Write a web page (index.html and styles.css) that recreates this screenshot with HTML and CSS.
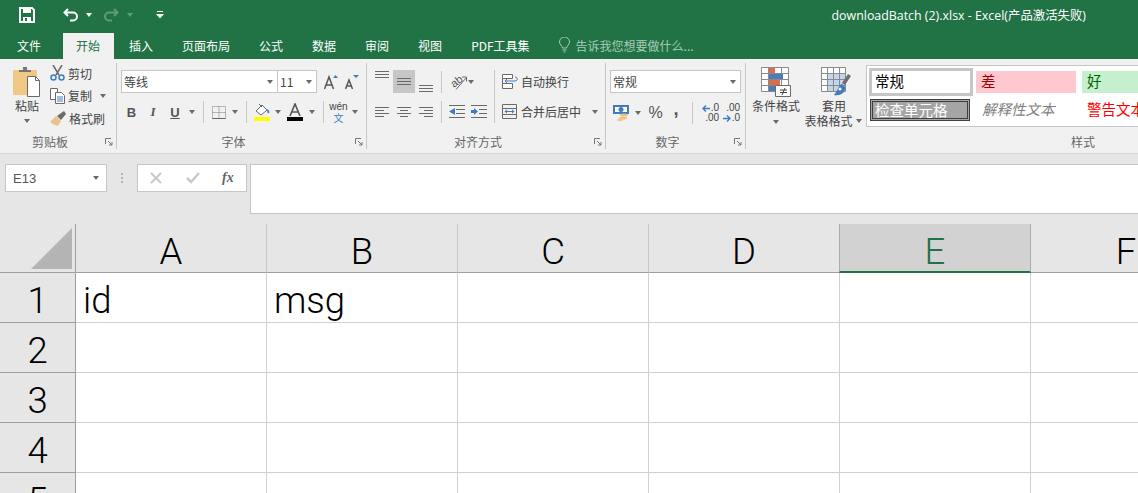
FILE: index.html
```html
<!DOCTYPE html>
<html>
<head>
<meta charset="utf-8">
<title>downloadBatch (2).xlsx - Excel</title>
<link rel="stylesheet" href="styles.css">
</head>
<body>

<div class="titlebar">
  <svg class="qa-save" width="16" height="16" viewBox="0 0 16 16"><path d="M1 1h12l2 2v12H1z" fill="none" stroke="#fff" stroke-width="2"/><path d="M4 1h8v5H4zM4 10h8v5H4z" fill="#fff"/><path d="M6 11h2v3H6z" fill="#217346"/></svg>
  <svg class="qa-undo" width="16" height="14" viewBox="0 0 16 14"><path d="M5 1L1.500 4.500 5 8M2 4.500h8a4 4 0 0 1 0 8H7" fill="none" stroke="#fff" stroke-width="2"/></svg>
  <span class="caret caret-white qa-caret1"></span>
  <svg class="qa-redo" width="16" height="14" viewBox="0 0 16 14"><path d="M11 1l3.500 3.500L11 8M14 4.500H6a4 4 0 0 0 0 8h3" fill="none" stroke="#5f9c7e" stroke-width="2"/></svg>
  <span class="caret caret-dim qa-caret2"></span>
  <svg class="qa-more" width="8" height="9" viewBox="0 0 8 9"><path d="M1 1.500h6" stroke="#fff"/><path d="M0 4h8L4 8.500z" fill="#fff"/></svg>
  <div class="doc-title">downloadBatch (2).xlsx - Excel(产品激活失败)</div>
</div>

<div class="tabs">
  <a class="tab tab-first">文件</a>
  <a class="tab tab-active">开始</a>
  <a class="tab">插入</a>
  <a class="tab">页面布局</a>
  <a class="tab">公式</a>
  <a class="tab">数据</a>
  <a class="tab">审阅</a>
  <a class="tab">视图</a>
  <a class="tab">PDF工具集</a>
  <div class="tell">
    <svg width="11" height="16" viewBox="0 0 11 16"><path d="M3.500 11C3 8.500 .5 7.500 .5 5a5 5 0 0 1 10 0c0 2.500-2.500 3.500-3 6zM3.500 13h4M4.500 15h2" fill="none" stroke="#a9cbb8"/></svg>
    <span>告诉我您想要做什么...</span>
  </div>
</div>

<div class="ribbon">

  <div class="group group-clip">
    <div class="group-body clip-body">
      <div class="paste">
        <svg width="28" height="30" viewBox="0 0 28 30"><rect y="3" width="24" height="25" rx="1" fill="#f0c884"/><path d="M6 5V3h4V0h4v3h4v2z" fill="#767676"/><path d="M14.500 9.500h8l4 4v16h-12z" fill="#fff" stroke="#6a6a6a"/><path d="M22.500 9.500v4h4" fill="none" stroke="#6a6a6a"/></svg>
        <span class="paste-label">粘贴</span>
        <span class="caret"></span>
      </div>
      <div class="clip-list">
        <div class="clip-row">
          <svg width="15" height="16" viewBox="0 0 15 16"><path d="M3 0l6 10M12 0L6 10" stroke="#6a6a6a" stroke-width="1.500"/><circle cx="3.500" cy="12.500" r="2.500" fill="none" stroke="#3f7cbf" stroke-width="1.500"/><circle cx="11.500" cy="12.500" r="2.500" fill="none" stroke="#3f7cbf" stroke-width="1.500"/></svg>
          <span>剪切</span>
        </div>
        <div class="clip-row">
          <svg width="15" height="16" viewBox="0 0 15 16"><path d="M.5 .5h7v11h-7z" fill="#fff" stroke="#6a6a6a"/><path d="M5.500 4.500h6l3 3v8h-9z" fill="#fff" stroke="#6a6a6a"/><path d="M7 9h6M7 11h6M7 13h6" stroke="#3f7cbf"/></svg>
          <span>复制</span>
          <span class="caret caret-copy"></span>
        </div>
        <div class="clip-row">
          <svg width="16" height="15" viewBox="0 0 16 15"><path d="M0 11l6-6 5 5-3 5c-3-1-6-2-8-4z" fill="#e8c48a"/><path d="M7 5l4 4 5-6-2-3z" fill="#6a6a6a"/></svg>
          <span>格式刷</span>
        </div>
      </div>
    </div>
    <div class="group-foot"><span class="group-name">剪贴板</span><svg class="launcher" width="8" height="8" viewBox="0 0 8 8"><path d="M.5 6V.5H6M3 3l4 4M7 4v3H4" fill="none" stroke="#777"/></svg></div>
  </div>

  <div class="group group-font">
    <div class="group-body font-body">
      <div class="font-top">
        <div class="combo combo-font"><span>等线</span><span class="caret"></span></div>
        <div class="combo combo-size"><span>11</span><span class="caret"></span></div>
        <div class="grow-btns">
          <svg width="14" height="16" viewBox="0 0 14 16"><path d="M.5 15L5 3l4.500 12M2.500 11h5" fill="none" stroke="#555" stroke-width="1.500"/><path d="M9 4l2.500-3L14 4z" fill="#3f7cbf"/></svg>
          <svg width="14" height="16" viewBox="0 0 14 16"><path d="M.5 15L4 6l3.500 9M2 12h4" fill="none" stroke="#555" stroke-width="1.500"/><path d="M8 1h6l-3 3z" fill="#3f7cbf"/></svg>
        </div>
      </div>
      <div class="font-tools">
        <span class="t-b">B</span>
        <span class="t-i">I</span>
        <span class="t-u">U</span>
        <span class="caret"></span>
        <span class="sep"></span>
        <svg width="14" height="13" viewBox="0 0 14 13"><path d="M.5 .5h13v12H.5zM7 .5v12M.5 6.500h13" fill="none" stroke="#7a7a7a" stroke-dasharray="1 1"/><path d="M.5 12.500h13" stroke="#666"/></svg>
        <span class="caret"></span>
        <span class="sep"></span>
        <svg width="17" height="18" viewBox="0 0 17 18"><path d="M2 8l6-6 5 5-6 5z" fill="#fff" stroke="#6a6a6a"/><path d="M5 1l3 3" stroke="#6a6a6a"/><path d="M13 6c2 1 3 3 2 4s-2 0-2-4z" fill="#3f7cbf"/><rect y="14" width="16" height="4" fill="#ffff00"/></svg>
        <span class="caret"></span>
        <svg width="16" height="18" viewBox="0 0 16 18"><path d="M3 13L8 1l5 12M5 9h6" fill="none" stroke="#555" stroke-width="1.600"/><rect y="14" width="16" height="4" fill="#000"/></svg>
        <span class="caret"></span>
        <span class="sep"></span>
        <span class="wen"><span class="wen-top">wén</span><span class="wen-bot">文</span></span>
        <span class="caret"></span>
      </div>
    </div>
    <div class="group-foot"><span class="group-name">字体</span><svg class="launcher" width="8" height="8" viewBox="0 0 8 8"><path d="M.5 6V.5H6M3 3l4 4M7 4v3H4" fill="none" stroke="#777"/></svg></div>
  </div>

  <div class="group group-align">
    <div class="group-body align-body">
      <div class="align-left">
        <div class="align-row">
          <span class="a-btn a-top"><svg width="14" height="7" viewBox="0 0 14 7"><path d="M0 .5h14M0 3.500h14M0 6.500h14" stroke="#6a6a6a"/></svg></span>
          <span class="a-btn a-active"><svg width="14" height="7" viewBox="0 0 14 7"><path d="M0 .5h14M0 3.500h14M0 6.500h14" stroke="#6a6a6a"/></svg></span>
          <span class="a-btn a-bottom"><svg width="14" height="7" viewBox="0 0 14 7"><path d="M0 .5h14M0 3.500h14M0 6.500h14" stroke="#6a6a6a"/></svg></span>
          <span class="sep"></span>
          <span class="a-orient">
            <svg width="18" height="16" viewBox="0 0 18 16"><text x="5" y="14" class="orient-text" transform="rotate(-38 5 14)">ab</text><path d="M7 15.500L17 4M13 3h4.500v4.500" fill="none" stroke="#6a6a6a"/></svg>
            <span class="caret"></span>
          </span>
        </div>
        <div class="align-row">
          <span class="a-btn"><svg width="14" height="10" viewBox="0 0 14 10"><path d="M0 .5h14M0 3.500h9M0 6.500h14M0 9.500h9" stroke="#6a6a6a"/></svg></span>
          <span class="a-btn"><svg width="14" height="10" viewBox="0 0 14 10"><path d="M0 .5h14M3 3.500h8M0 6.500h14M3 9.500h8" stroke="#6a6a6a"/></svg></span>
          <span class="a-btn"><svg width="14" height="10" viewBox="0 0 14 10"><path d="M0 .5h14M5 3.500h9M0 6.500h14M5 9.500h9" stroke="#6a6a6a"/></svg></span>
          <span class="sep"></span>
          <span class="a-indent">
            <svg width="16" height="13" viewBox="0 0 16 13"><path d="M0 .5h16M7 4.500h9M7 8.500h9M0 12.500h16" stroke="#6a6a6a"/><path d="M6 3v7L0 6.500z" fill="#3f7cbf"/></svg>
            <svg width="16" height="13" viewBox="0 0 16 13"><path d="M0 .5h16M8 4.500h8M8 8.500h8M0 12.500h16" stroke="#6a6a6a"/><path d="M0 5h3V3l4 3.500L3 10V8H0z" fill="#3f7cbf"/></svg>
          </span>
        </div>
      </div>
      <span class="sep sep-tall"></span>
      <div class="align-right">
        <div class="wide-btn">
          <svg width="16" height="15" viewBox="0 0 16 15"><path d="M.5 .5h10v4H.5zM.5 9.500h10v5H.5z" fill="#fff" stroke="#6a6a6a"/><path d="M.5 4.500v5" stroke="#6a6a6a"/><path d="M3 7h10c3 0 3-4 0-4M5 5L3 7l2 2" fill="none" stroke="#3f7cbf"/></svg>
          <span>自动换行</span>
        </div>
        <div class="wide-btn">
          <svg width="15" height="15" viewBox="0 0 15 15"><path d="M.5 .5h14v14H.5zM.5 4.500h14M.5 10.500h14" fill="none" stroke="#6a6a6a"/><path d="M3 7.500h9" stroke="#3f7cbf"/><path d="M5 5.500v4L2.500 7.500zM10 5.500v4l2.500-2z" fill="#3f7cbf"/></svg>
          <span class="merge-text">合并后居中</span>
          <span class="caret caret-merge"></span>
        </div>
      </div>
    </div>
    <div class="group-foot"><span class="group-name">对齐方式</span><svg class="launcher" width="8" height="8" viewBox="0 0 8 8"><path d="M.5 6V.5H6M3 3l4 4M7 4v3H4" fill="none" stroke="#777"/></svg></div>
  </div>

  <div class="group group-num">
    <div class="group-body num-body">
      <div class="combo combo-num"><span>常规</span><span class="caret"></span></div>
      <div class="num-tools">
        <svg width="17" height="16" viewBox="0 0 17 16"><path d="M0 0h16v9H0z" fill="#3f7cbf"/><path d="M2 2h12v5H2z" fill="#fff"/><circle cx="8" cy="4.500" r="2.500" fill="#3f7cbf"/><ellipse cx="11" cy="10" rx="4" ry="1.500" fill="#efc27a"/><ellipse cx="10" cy="13" rx="4" ry="1.500" fill="#efc27a"/><ellipse cx="7" cy="15" rx="3" ry="1" fill="#efc27a"/></svg>
        <span class="caret"></span>
        <span class="t-pct">%</span>
        <span class="t-comma">,</span>
        <span class="sep"></span>
        <span class="dec"><span class="dec-line"><svg width="8" height="7" viewBox="0 0 8 7"><path d="M8 3.500H1M4 .5l-3 3 3 3" fill="none" stroke="#3f7cbf" stroke-width="1.400"/></svg>.0</span><span class="dec-line">.00</span></span>
        <span class="dec"><span class="dec-line">.00</span><span class="dec-line"><svg width="8" height="7" viewBox="0 0 8 7"><path d="M0 3.500h7M4 .5l3 3-3 3" fill="none" stroke="#3f7cbf" stroke-width="1.400"/></svg>.0</span></span>
      </div>
    </div>
    <div class="group-foot"><span class="group-name">数字</span><svg class="launcher" width="8" height="8" viewBox="0 0 8 8"><path d="M.5 6V.5H6M3 3l4 4M7 4v3H4" fill="none" stroke="#777"/></svg></div>
  </div>

  <div class="group group-style">
    <div class="group-body style-body">
      <div class="big-btn btn-cond">
        <svg width="30" height="30" viewBox="0 0 30 30"><path d="M.5 .5h27v24H.5zM.5 6.500h27M.5 12.500h27M.5 18.500h27M7.500 .5v24M20.500 .5v24" fill="#fff" stroke="#8a8a8a"/><path d="M8 1h6v5H8zM8 13h11v5H8z" fill="#dd6b4d"/><path d="M8 7h14v5H8zM8 19h6v5H8z" fill="#4a7ebb"/><path d="M14.500 18.500h15v11h-15z" fill="#fff" stroke="#6a6a6a"/><path d="M19 23h7M19 25.500h7M24 21l-3 7" stroke="#444" fill="none"/></svg>
        <span>条件格式</span>
        <span class="caret"></span>
      </div>
      <div class="big-btn btn-table">
        <svg width="30" height="30" viewBox="0 0 30 30"><path d="M.5 .5h24v24H.5z" fill="#fff" stroke="#8a8a8a"/><path d="M7 6h17v18H7z" fill="#c3d5ea"/><path d="M.5 6.500h24M.5 12.500h24M.5 18.500h24M6.500 .5v24M12.500 .5v24M18.500 .5v24" stroke="#8a8a8a" fill="none"/><path d="M21 16l6-9 3 2-6 9z" fill="#6e6e6e"/><path d="M21 17c-4 1-3 5-8 11 6 1 12-2 11-8z" fill="#3f7cbf"/><circle cx="19" cy="22" r="1.500" fill="#fff"/></svg>
        <span>套用</span>
        <span class="btn-line">表格格式<span class="caret"></span></span>
      </div>
      <div class="gallery">
        <div class="cell-style cs-normal">常规</div>
        <div class="cell-style cs-bad">差</div>
        <div class="cell-style cs-good">好</div>
        <div class="cell-style cs-check">检查单元格</div>
        <div class="cell-style cs-note">解释性文本</div>
        <div class="cell-style cs-warn">警告文本</div>
      </div>
    </div>
    <div class="group-foot"><span class="group-name">样式</span><svg class="launcher" width="8" height="8" viewBox="0 0 8 8"><path d="M.5 6V.5H6M3 3l4 4M7 4v3H4" fill="none" stroke="#777"/></svg></div>
  </div>

</div>

<div class="formula">
  <div class="namebox"><span>E13</span><span class="caret"></span></div>
  <div class="dots"><i></i><i></i><i></i></div>
  <div class="fx-box">
    <svg width="12" height="12" viewBox="0 0 12 12"><path d="M1 1l10 10M11 1L1 11" stroke="#c8c8c8" stroke-width="2"/></svg>
    <svg width="14" height="12" viewBox="0 0 14 12"><path d="M1 6l4 4 8-9" fill="none" stroke="#c8c8c8" stroke-width="2.500"/></svg>
    <span class="fx">fx</span>
  </div>
  <div class="formula-input"></div>
</div>

<div class="sheet">
  <div class="corner"><svg width="41" height="41" viewBox="0 0 41 41"><path d="M41 0v41H0z" fill="#b4b4b4"/></svg></div>
  <div class="col">A</div>
  <div class="col">B</div>
  <div class="col">C</div>
  <div class="col">D</div>
  <div class="col col-sel">E</div>
  <div class="col">F</div>

  <div class="row">1</div>
  <div class="cell">id</div>
  <div class="cell">msg</div>
  <div class="cell"></div>
  <div class="cell"></div>
  <div class="cell"></div>
  <div class="cell"></div>

  <div class="row">2</div>
  <div class="cell"></div>
  <div class="cell"></div>
  <div class="cell"></div>
  <div class="cell"></div>
  <div class="cell"></div>
  <div class="cell"></div>

  <div class="row">3</div>
  <div class="cell"></div>
  <div class="cell"></div>
  <div class="cell"></div>
  <div class="cell"></div>
  <div class="cell"></div>
  <div class="cell"></div>

  <div class="row">4</div>
  <div class="cell"></div>
  <div class="cell"></div>
  <div class="cell"></div>
  <div class="cell"></div>
  <div class="cell"></div>
  <div class="cell"></div>

  <div class="row">5</div>
  <div class="cell"></div>
  <div class="cell"></div>
  <div class="cell"></div>
  <div class="cell"></div>
  <div class="cell"></div>
  <div class="cell"></div>
</div>

</body>
</html>
```

FILE: styles.css
```css
html, body {
  margin: 0;
  padding: 0;
  width: 1138px;
  height: 493px;
  overflow: hidden;
}

body {
  font-family: "Noto Sans CJK SC", "Liberation Sans", sans-serif;
  font-size: 12px;
  color: #444;
  background-color: #e6e6e6;
}

svg {
  display: block;
  flex: none;
}

.caret {
  display: inline-block;
  flex: none;
  width: 0;
  height: 0;
  border-left: 3.5px solid transparent;
  border-right: 3.5px solid transparent;
  border-top: 4px solid #6a6a6a;
}

.caret-white {
  border-top-color: #fff;
}

.caret-dim {
  border-top-color: #5f9c7e;
}

.sep {
  display: block;
  width: 1px;
  height: 22px;
  background-color: #c6c6c6;
  justify-self: center;
}

/* title bar */
.titlebar {
  display: flex;
  align-items: center;
  box-sizing: border-box;
  height: 33px;
  padding: 0 0 4px 19px;
  background-color: #217346;
}

.qa-undo {
  margin-left: 28px;
}

.qa-caret1 {
  margin-left: 7px;
}

.qa-redo {
  margin-left: 11px;
}

.qa-caret2 {
  margin-left: 8px;
}

.qa-more {
  margin-left: 23px;
}

.doc-title {
  margin-left: auto;
  padding-right: 52px;
  color: #fff;
  font-family: "Open Sans", "Noto Sans CJK SC", sans-serif;
  font-size: 12.4px;
}

/* tabs */
.tabs {
  display: flex;
  align-items: stretch;
  height: 26px;
  background-color: #217346;
}

.tab {
  display: flex;
  align-items: center;
  box-sizing: border-box;
  padding: 0 14px 2px;
  margin-right: 1px;
  color: #fff;
  font-size: 12px;
}

.tab-first {
  margin-left: 3px;
}

.tab-active {
  margin-left: 7px;
  padding-left: 13px;
  background-color: #f1f1f1;
  color: #217346;
}

.tell {
  display: flex;
  align-items: center;
  gap: 6px;
  margin-left: 14px;
  padding-bottom: 2px;
  color: #a9cbb8;
}

/* ribbon */
.ribbon {
  display: flex;
  height: 95px;
  box-sizing: border-box;
  border-bottom: 1px solid #d6d6d6;
  background-color: #f1f1f1;
  overflow: hidden;
}

.group {
  flex: none;
  display: flex;
  flex-direction: column;
  box-sizing: border-box;
  height: 86px;
  margin-top: 4px;
  border-right: 1px solid #c6c6c6;
}

.group-clip {
  width: 117px;
}

.group-font {
  width: 250px;
}

.group-align {
  width: 239px;
}

.group-num {
  width: 140px;
}

.group-style {
  width: 690px;
  border-right: 0;
}

.group-body {
  height: 72px;
}

.group-foot {
  display: flex;
  align-items: center;
  height: 14px;
}

.group-name {
  flex: 1;
  text-align: center;
  line-height: 14px;
  color: #666;
}

.launcher {
  width: 8px;
  margin: 0 3px 0 5px;
}

/* clipboard */
.clip-body {
  display: flex;
  padding-left: 13px;
}

.paste {
  display: flex;
  flex-direction: column;
  align-items: center;
  width: 28px;
  padding-top: 4px;
}

.paste-label {
  line-height: 18px;
}

.paste .caret {
  margin-top: 4px;
}

.clip-list {
  margin-left: 9px;
  margin-top: -1px;
}

.clip-row {
  display: flex;
  align-items: center;
  gap: 3px;
  height: 22.5px;
}

.caret-copy {
  margin-left: 5px;
}

/* font */
.font-body {
  padding: 7px 0 0 4px;
}

.font-top {
  display: flex;
  align-items: center;
}

.combo {
  display: flex;
  align-items: center;
  justify-content: space-between;
  box-sizing: border-box;
  height: 23px;
  padding: 0 4px 0 2px;
  background-color: #fff;
  border: 1px solid #c6c6c6;
  color: #444;
}

.combo-font {
  width: 157px;
}

.combo-size {
  width: 40px;
  margin-left: -1px;
}

.grow-btns {
  display: flex;
  gap: 7px;
  margin-left: 7px;
}

.font-tools {
  display: grid;
  grid-template-columns: 21px 22px 22px 12px 10px 21px 12px 10px 22px 10px 23px 12px 10px 21px 12px;
  justify-items: center;
  align-items: center;
  height: 24px;
  margin-top: 7px;
}

.t-b, .t-i, .t-u {
  font-family: "Liberation Sans", sans-serif;
  font-size: 13px;
  color: #555;
}

.t-b {
  font-weight: bold;
}

.t-i {
  font-family: "Liberation Serif", serif;
  font-style: italic;
  font-weight: bold;
}

.t-u {
  font-weight: bold;
  text-decoration: underline;
}

.wen {
  display: flex;
  flex-direction: column;
  align-items: center;
  line-height: 11px;
}

.wen-top {
  font-family: "Liberation Sans", sans-serif;
  font-size: 10px;
}

.wen-bot {
  font-size: 10px;
  color: #3f7cbf;
}

/* alignment */
.align-body {
  display: flex;
  padding: 7px 0 0 4px;
}

.align-left {
  display: flex;
  flex-direction: column;
  gap: 7px;
  width: 122px;
}

.align-row {
  display: grid;
  grid-template-columns: 22px 22px 22px 8px 48px;
  align-items: center;
  height: 23px;
}

.a-btn {
  display: flex;
  align-items: center;
  justify-content: center;
  height: 23px;
}

.a-top svg {
  margin-bottom: 14px;
}

.a-bottom svg {
  margin-top: 13px;
}

.a-active {
  background-color: #c6c6c6;
}

.a-orient {
  display: flex;
  align-items: center;
  gap: 1px;
  padding-left: 4px;
}

.a-indent {
  display: flex;
  gap: 6px;
  padding-left: 4px;
}

.orient-text {
  font-family: "Liberation Sans", sans-serif;
  font-size: 11px;
  fill: #555;
}

.sep-tall {
  height: 53px;
  margin-left: 1px;
}

.align-right {
  display: flex;
  flex-direction: column;
  gap: 7px;
  margin-left: 7px;
}

.wide-btn {
  display: flex;
  align-items: center;
  gap: 3px;
  height: 23px;
}

.merge-text {
  margin-left: 1px;
}

.caret-merge {
  margin-left: 8px;
}

/* number */
.num-body {
  padding: 7px 0 0 4px;
}

.combo-num {
  width: 131px;
}

.num-tools {
  display: grid;
  grid-template-columns: 22px 11px 25px 16px 16px 21px 21px;
  justify-items: center;
  align-items: center;
  height: 24px;
  margin-top: 7px;
}

.t-pct {
  font-family: "Liberation Sans", sans-serif;
  font-size: 16px;
  color: #555;
}

.t-comma {
  font-family: "Liberation Sans", sans-serif;
  font-size: 18px;
  font-weight: bold;
  line-height: 18px;
  margin-bottom: 8px;
  color: #555;
}

.dec {
  display: flex;
  flex-direction: column;
  align-items: flex-end;
  font-family: "Liberation Sans", sans-serif;
  font-size: 10px;
  line-height: 10px;
}

.dec-line {
  display: flex;
  align-items: center;
  gap: 1px;
}

/* styles */
.style-body {
  display: flex;
}

.big-btn {
  display: flex;
  flex-direction: column;
  align-items: center;
  padding-top: 4px;
  line-height: 15px;
}

.big-btn svg {
  margin-bottom: 1px;
}

.btn-cond {
  width: 60px;
}

.btn-cond .caret {
  margin-top: 7px;
}

.btn-table {
  width: 56px;
}

.btn-table svg {
  margin-left: 4px;
}

.btn-line {
  display: flex;
  align-items: center;
  gap: 3px;
  margin-left: -2px;
  white-space: nowrap;
}

.gallery {
  display: grid;
  grid-template-columns: 107px 106px 106px;
  grid-template-rows: 28px 30px;
  box-sizing: border-box;
  width: 330px;
  height: 62px;
  margin: 2px 0 0 4px;
  padding: 2px;
  background-color: #fff;
  border: 1px solid #c6c6c6;
  font-size: 14.5px;
}

.cell-style {
  box-sizing: border-box;
  width: 100px;
  height: 22px;
  padding-left: 5px;
  line-height: 20px;
  white-space: nowrap;
}

.cs-normal {
  width: 104px;
  height: 28px;
  padding-left: 3px;
  line-height: 20px;
  border: 3px solid #c6c6c6;
  color: #000;
}

.cs-bad {
  margin-top: 3px;
  background-color: #ffc7ce;
  color: #9c0006;
}

.cs-good {
  margin-top: 3px;
  background-color: #c6efce;
  color: #006100;
}

.cs-check {
  margin: 3px 0 0 1px;
  padding-left: 2px;
  line-height: 15px;
  background-color: #a5a5a5;
  border: 3px double #3f3f3f;
  color: #fff;
}

.cs-note {
  margin-top: 3px;
  padding-left: 6px;
  font-style: italic;
  color: #7f7f7f;
}

.cs-warn {
  margin-top: 3px;
  color: #ff0000;
}

/* formula bar */
.formula {
  display: flex;
  align-items: flex-start;
  height: 70px;
  box-sizing: border-box;
  padding-top: 10px;
  background-color: #e6e6e6;
}

.namebox {
  display: flex;
  align-items: center;
  justify-content: space-between;
  box-sizing: border-box;
  width: 102px;
  height: 28px;
  margin-left: 5px;
  padding: 0 7px;
  background-color: #fff;
  border: 1px solid #c6c6c6;
  font-family: "Liberation Sans", sans-serif;
  font-size: 13px;
  color: #555;
}

.dots {
  display: flex;
  flex-direction: column;
  align-items: center;
  justify-content: center;
  gap: 2px;
  width: 30px;
  height: 28px;
}

.dots i {
  display: block;
  width: 2px;
  height: 2px;
  background-color: #b4b4b4;
}

.fx-box {
  display: flex;
  align-items: center;
  box-sizing: border-box;
  gap: 24px;
  width: 110px;
  height: 28px;
  padding-left: 12px;
  background-color: #fff;
  border: 1px solid #c6c6c6;
}

.fx {
  font-family: "Liberation Serif", serif;
  font-size: 14px;
  font-style: italic;
  font-weight: bold;
  color: #666;
  margin-left: -2px;
}

.formula-input {
  flex: 1;
  box-sizing: border-box;
  height: 50px;
  margin-left: 3px;
  background-color: #fff;
  border: 1px solid #c6c6c6;
  border-right: 0;
}

/* sheet */
.sheet {
  display: grid;
  grid-template-columns: 76px repeat(6, 191px);
  grid-template-rows: 49px repeat(5, 50px);
  width: 1222px;
  font-family: Roboto, "Liberation Sans", sans-serif;
  font-size: 36.5px;
  font-weight: 300;
  color: #000;
  background-color: #fff;
}

.corner {
  display: flex;
  justify-content: flex-end;
  box-sizing: border-box;
  padding: 4px 3px 0 0;
  background-color: #e6e6e6;
  border-right: 1px solid #9f9f9f;
  border-bottom: 1px solid #9f9f9f;
}

.col {
  box-sizing: border-box;
  text-align: center;
  line-height: 56px;
  background-color: #e6e6e6;
  border-right: 1px solid #c6c6c6;
  border-bottom: 1px solid #9f9f9f;
}

.col-sel {
  background-color: #d2d2d2;
  color: #217346;
  border-left: 1px solid #ababab;
  border-right: 1px solid #ababab;
  margin-left: -1px;
  border-bottom: 2px solid #217346;
}

.row {
  box-sizing: border-box;
  text-align: center;
  line-height: 56px;
  background-color: #e6e6e6;
  border-right: 1px solid #9f9f9f;
  border-bottom: 1px solid #9f9f9f;
}

.cell {
  box-sizing: border-box;
  padding-left: 7px;
  line-height: 56px;
  border-right: 1px solid #d0d0d0;
  border-bottom: 1px solid #d0d0d0;
}
```
